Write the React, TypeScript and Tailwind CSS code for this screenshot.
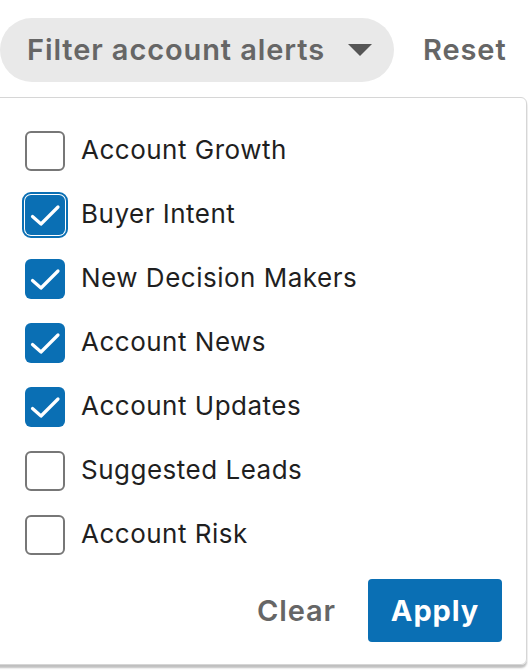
import { useState } from 'react';

const ITEMS = [
  { label: 'Account Growth', checked: false },
  { label: 'Buyer Intent', checked: true, focused: true },
  { label: 'New Decision Makers', checked: true },
  { label: 'Account News', checked: true },
  { label: 'Account Updates', checked: true },
  { label: 'Suggested Leads', checked: false },
  { label: 'Account Risk', checked: false },
];

export default function App() {
  const [items, setItems] = useState(ITEMS);

  const toggle = (i: number) =>
    setItems(prev => prev.map((it, j) => (j === i ? { ...it, checked: !it.checked } : it)));

  return (
    <div className="w-[528px] h-[670px] bg-white overflow-hidden font-['Inter','Liberation_Sans',sans-serif]">
      <div className="flex items-center pt-[18px]">
        <button className="h-[64px] w-[394px] rounded-full bg-[#e9e9e9] flex items-center pl-[27px] text-[29px] font-semibold text-[#666666] tracking-[0.9px]">
          Filter account alerts
          <svg className="ml-auto mr-[22px]" width="24" height="12" viewBox="0 0 24 12">
            <path d="M0 0 L24 0 L12 12 Z" fill="#555555" />
          </svg>
        </button>
        <button className="ml-[29px] text-[29px] font-semibold text-[#666666] tracking-[0.9px]">Reset</button>
      </div>

      <div className="mt-[15px] ml-[-6px] w-[533px] h-[568px] border border-[#d6d6d6] rounded-tr-[6px] rounded-br-[6px] shadow-[0_3px_2px_rgba(0,0,0,0.25)] pt-[21px] pl-[30px] pr-[24px] flex flex-col">
        {items.map((it, i) => (
          <label key={it.label} className="h-[64px] flex items-center cursor-pointer" onClick={() => toggle(i)}>
            <span
              className={
                'w-[40px] h-[40px] rounded-[6px] flex items-center justify-center shrink-0 ' +
                (it.checked ? 'bg-[#0a6fb4] ' : 'border-2 border-[#777777] bg-white ') +
                (it.focused ? 'outline-2 outline-offset-1 outline-[#0a6fb4]' : '')
              }
            >
              {it.checked && (
                <svg width="40" height="40" viewBox="0 0 40 40">
                  <path d="M7.5 21.5 L16 29 L33 12" fill="none" stroke="#ffffff" strokeWidth="3.2" strokeLinecap="round" strokeLinejoin="round" />
                </svg>
              )}
            </span>
            <span className="ml-[16px] pb-[4px] text-[26px] tracking-[0.5px] text-[#1f1f1f]">{it.label}</span>
          </label>
        ))}

        <div className="flex items-center justify-end mt-[12px]">
          <button className="text-[29px] font-semibold text-[#666666] tracking-[0.9px] mr-[32px]">Clear</button>
          <button className="w-[134px] h-[63px] rounded-[4px] bg-[#0a6fb4] text-white text-[29px] font-bold tracking-[0.9px]">Apply</button>
        </div>
      </div>
    </div>
  );
}
